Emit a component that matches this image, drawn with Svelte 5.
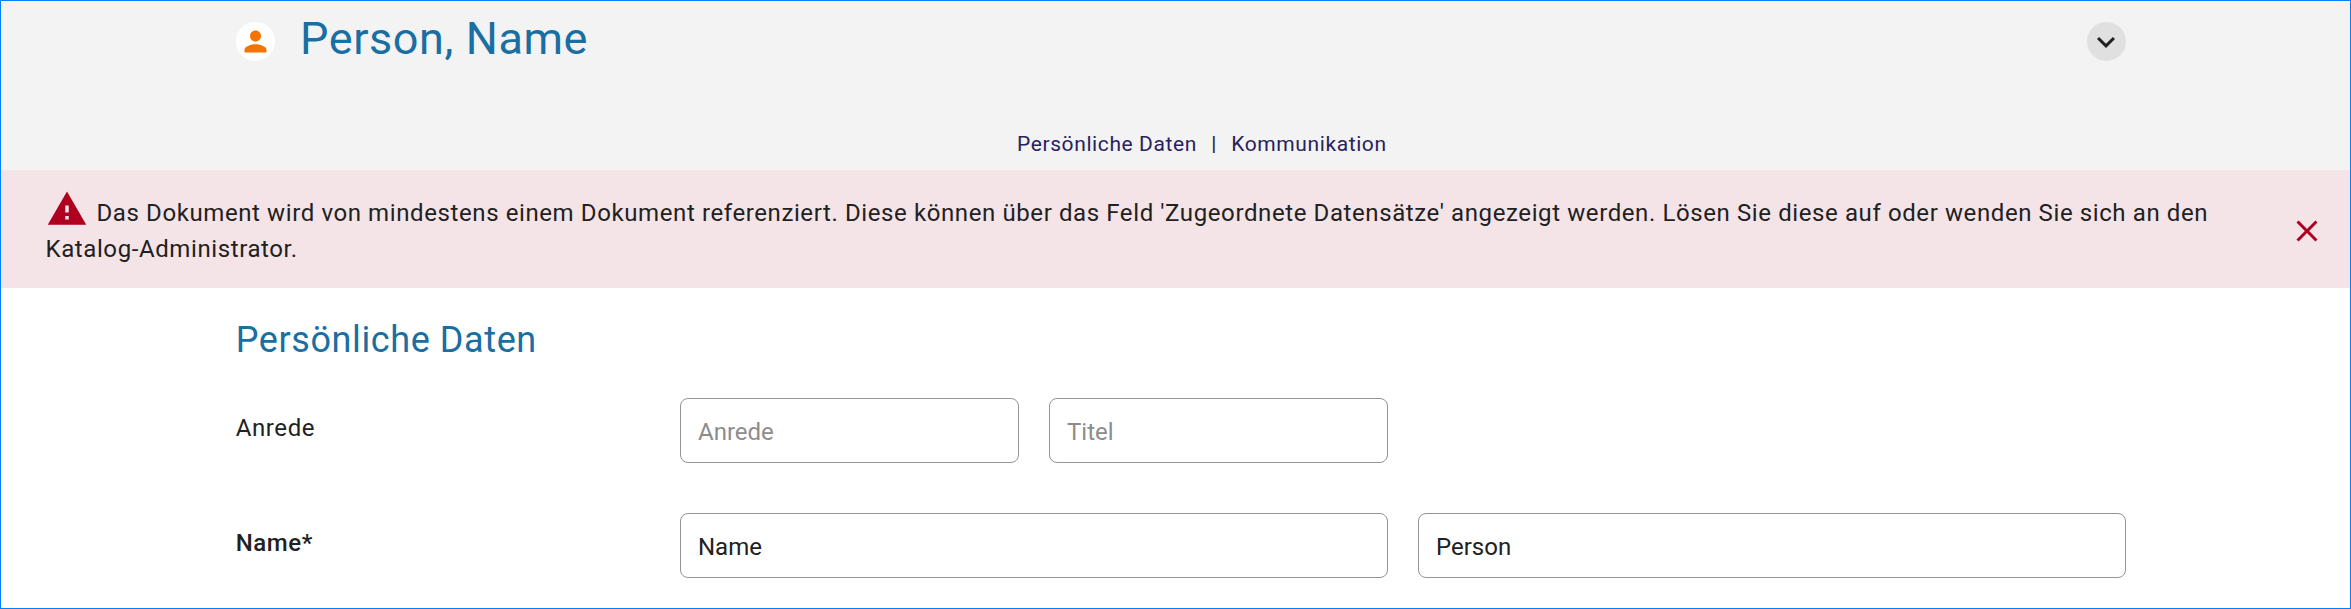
<script>
  const title = 'Person, Name';
  const sections = ['Persönliche Daten', 'Kommunikation'];
  const message =
    "Das Dokument wird von mindestens einem Dokument referenziert. Diese können über das Feld 'Zugeordnete Datensätze' angezeigt werden. Lösen Sie diese auf oder wenden Sie sich an den Katalog-Administrator.";
</script>

<div class="page">
  <header>
    <div class="title-row">
      <span class="avatar">
        <svg viewBox="0 0 24 24" width="33" height="33" fill="#f57300">
          <path d="M12 12c2.21 0 4-1.79 4-4s-1.79-4-4-4-4 1.79-4 4 1.79 4 4 4zm0 2c-2.67 0-8 1.34-8 4v2h16v-2c0-2.66-5.33-4-8-4z" />
        </svg>
      </span>
      <h1>{title}</h1>
      <button class="toggle" aria-label="Aufklappen">
        <svg viewBox="0 0 24 24" width="36" height="36" fill="#212121">
          <path d="M7.41 8.59 12 13.17l4.59-4.58L18 10l-6 6-6-6z" />
        </svg>
      </button>
    </div>
    <nav>
      <a href="#daten">{sections[0]}</a>
      <span>|</span>
      <a href="#kommunikation">{sections[1]}</a>
    </nav>
  </header>

  <div class="alert" role="alert">
    <p>
      <svg class="warn" viewBox="0 0 24 24" width="42" height="42" fill="#b00020"><path d="M1 21h22L12 2 1 21zm12-3h-2v-2h2v2zm0-4h-2v-4h2v4z" /></svg>{message}
    </p>
    <button class="close" aria-label="Schließen">
      <svg viewBox="0 0 24 24" width="36" height="36" fill="#b00020">
        <path d="M19 6.41 17.59 5 12 10.59 6.41 5 5 6.41 10.59 12 5 17.59 6.41 19 12 13.41 17.59 19 19 17.59 13.41 12z" />
      </svg>
    </button>
  </div>

  <main>
    <h2 id="daten">{sections[0]}</h2>
    <div class="row">
      <span class="label">Anrede</span>
      <div class="fields">
        <div class="pair">
          <input placeholder="Anrede" />
          <input placeholder="Titel" />
        </div>
      </div>
    </div>
    <div class="row">
      <span class="label required">Name*</span>
      <div class="fields">
        <input value="Name" />
        <input value="Person" />
      </div>
    </div>
  </main>
</div>

<style>
  :global(body) {
    margin: 0;
  }
  .page {
    box-sizing: border-box;
    width: 2351px;
    height: 609px;
    border: 1px solid #0080ff;
    overflow: hidden;
    background: #fff;
    color: #212121;
    font: 24px/36px Roboto, sans-serif;
    letter-spacing: 0.6px;
  }
  header {
    box-sizing: border-box;
    height: 169px;
    padding: 15px 224px 0 235px;
    background: #f3f3f3;
  }
  .title-row {
    display: flex;
    align-items: flex-start;
    height: 112px;
  }
  .avatar,
  .toggle {
    display: flex;
    align-items: center;
    justify-content: center;
    flex: none;
    width: 39px;
    height: 39px;
    margin-top: 6px;
    border-radius: 50%;
    background: #fff;
  }
  .avatar svg {
    margin-right: 1px;
  }
  button {
    padding: 0;
    border: 0;
    background: none;
  }
  .toggle {
    background: #e0e0e0;
  }
  .toggle svg {
    flex: none;
    margin-right: 1px;
  }
  h1,
  h2 {
    margin: 0;
    color: #196ea2;
    font-weight: 400;
  }
  h1 {
    flex: 1;
    margin-left: 25px;
    font-size: 45px;
    line-height: 45px;
  }
  nav {
    display: flex;
    gap: 14.3px;
    margin-left: 781px;
    font-size: 21px;
    line-height: 32px;
  }
  nav a {
    color: #28225c;
    text-decoration: none;
  }
  .alert {
    box-sizing: border-box;
    display: flex;
    align-items: flex-start;
    justify-content: space-between;
    height: 118px;
    padding: 25px 25px 0 44.5px;
    background: #f5e4e7;
  }
  .alert p {
    width: 2200px;
    margin: 0;
  }
  .warn {
    display: inline-block;
    margin: -9px 9px 0 0;
    vertical-align: -8.5px;
  }
  .close {
    width: 36px;
    height: 36px;
    margin-top: 18px;
  }
  .close svg {
    display: block;
  }
  main {
    padding: 28px 224px 0 234.7px;
  }
  h2 {
    height: 82px;
    font-size: 36px;
    line-height: 48px;
  }
  .row {
    display: flex;
    height: 65px;
    margin-bottom: 50px;
  }
  .label {
    flex: 1;
    padding-top: 12px;
  }
  .required {
    font-weight: 500;
  }
  .fields {
    display: grid;
    grid-template-columns: 1fr 1fr;
    gap: 30px;
    width: 1446px;
  }
  .pair {
    display: grid;
    grid-template-columns: 1fr 1fr;
    gap: 30px;
  }
  input {
    box-sizing: border-box;
    width: 100%;
    height: 65px;
    padding: 3px 17px 0 17px;
    border: 1px solid #949494;
    border-radius: 8px;
    background: #fff;
    color: #212121;
    font: 24px Roboto, sans-serif;
  }
  input::placeholder {
    color: #8c8c8c;
    opacity: 1;
  }
</style>
